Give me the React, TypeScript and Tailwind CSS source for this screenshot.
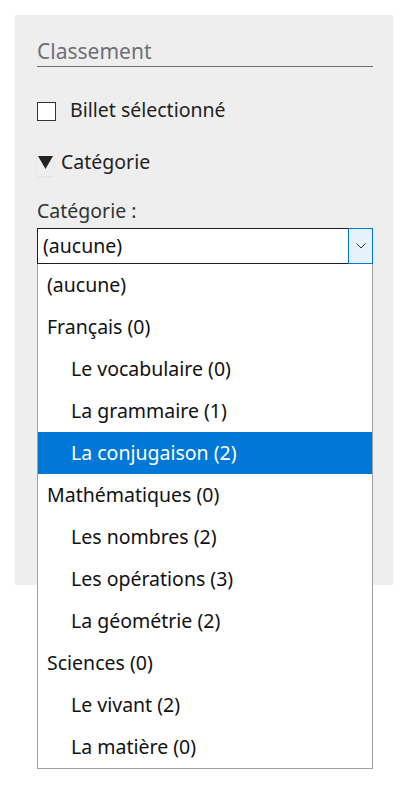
import React from "react";

const items: { label: string; sub: boolean; selected?: boolean }[] = [
  { label: "(aucune)", sub: false },
  { label: "Français (0)", sub: false },
  { label: "Le vocabulaire (0)", sub: true },
  { label: "La grammaire (1)", sub: true },
  { label: "La conjugaison (2)", sub: true, selected: true },
  { label: "Mathématiques (0)", sub: false },
  { label: "Les nombres (2)", sub: true },
  { label: "Les opérations (3)", sub: true },
  { label: "La géométrie (2)", sub: true },
  { label: "Sciences (0)", sub: false },
  { label: "Le vivant (2)", sub: true },
  { label: "La matière (0)", sub: true },
];

export default function App() {
  return (
    <div
      className="w-[409px] h-[785px] bg-white pt-[15px] pl-[15px]"
      style={{ fontFamily: '"Noto Sans", "Open Sans", sans-serif' }}
    >
      <div className="relative w-[378px] h-[570px] bg-[#eeeeee] pl-[22px] pr-[20px] pt-[21px]">
        <div className="border-b border-[#6f6f7a] pb-[0px] text-[21px] leading-[30px] text-[#6f6f7a]">
          Classement
        </div>
        <div className="mt-[34px] flex items-center h-[20px]">
          <div className="w-[19px] h-[19px] border border-[#333] bg-white" />
          <span className="ml-[14px] text-[19.5px] leading-[20px] text-[#222] -mt-[3px]">Billet sélectionné</span>
        </div>
        <div className="mt-[31px] flex items-center h-[24px]">
          <div className="w-[16px] h-[24px] flex items-start justify-center shadow-[0_1px_2px_rgba(0,0,0,0.06)]">
            <svg width="15" height="13" viewBox="0 0 15 13" className="mt-[4px]">
              <polygon points="0,0 15,0 7.5,13" fill="#222" />
            </svg>
          </div>
          <span className="ml-[8px] text-[19.5px] leading-[24px] text-[#222] -mt-[4px]">Catégorie</span>
        </div>
        <div className="mt-[23px] text-[19.5px] leading-[24px] text-[#333]">Catégorie :</div>
        <div className="mt-[5px] flex h-[36px] w-[336px] border border-[#1e1e1e] bg-white">
          <div className="flex-1 pl-[5px] text-[19.5px] leading-[34px] text-[#111]">(aucune)</div>
          <div className="w-[25px] -my-px -mr-px h-[36px] border border-[#0078d7] bg-[#e5f1fb] flex items-center justify-center">
            <svg width="10" height="6" viewBox="0 0 10 6">
              <polyline points="0.5,0.5 5,5 9.5,0.5" fill="none" stroke="#333" strokeWidth="1" />
            </svg>
          </div>
        </div>
        <div className="absolute left-[22px] top-[249px] w-[336px] border border-[#a0a0a0] border-t-0 bg-white z-10">
          {items.map((it) => (
            <div
              key={it.label}
              className={
                "h-[42px] flex items-center text-[19.5px] " +
                (it.sub ? "pl-[33px] " : "pl-[9px] ") +
                (it.selected ? "bg-[#0078d7] text-white" : "text-[#111]")
              }
            >
              {it.label}
            </div>
          ))}
        </div>
      </div>
    </div>
  );
}
